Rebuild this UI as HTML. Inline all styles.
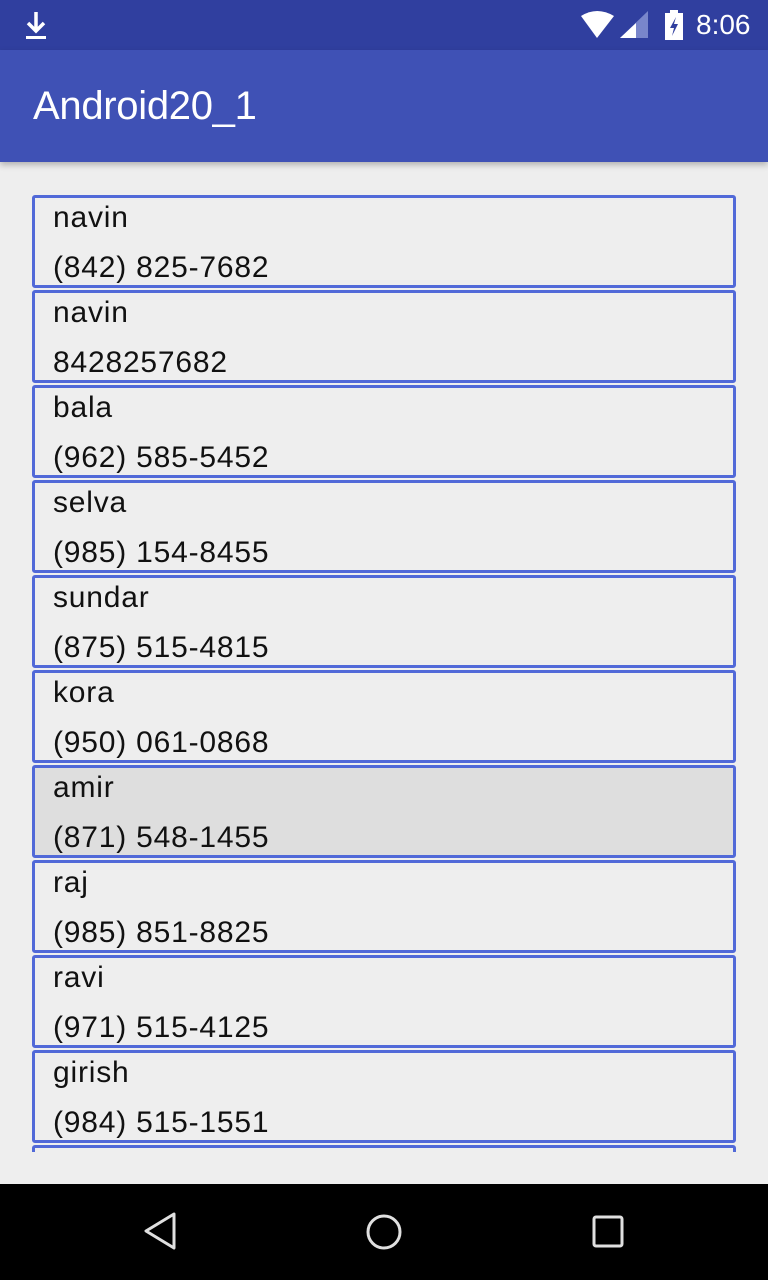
<!DOCTYPE html>
<html><head><meta charset="utf-8"><style>
*{margin:0;padding:0;box-sizing:border-box}
body{width:768px;height:1280px;background:#eeeeee;font-family:"Liberation Sans",Roboto,sans-serif;position:relative;overflow:hidden}
.sb{position:absolute;left:0;top:0;width:768px;height:50px;background:#303f9f;color:#fff}
.tb{position:absolute;left:0;top:50px;width:768px;height:112px;background:#3f51b5;box-shadow:0 3px 6px rgba(0,0,0,.25);z-index:2}
.tb span{position:absolute;left:33px;top:34px;font-size:40px;color:#fff;letter-spacing:-0.3px}
.list{position:absolute;left:0;top:162px;width:768px;height:990px;overflow:hidden}
.it{position:absolute;left:32px;width:704px;height:93px;border:3px solid #5169d8;border-radius:3px;background:#eeeeee}
.it.sel{background:#dedede}
.it div{position:absolute;left:18px;font-size:30px;color:#111;letter-spacing:0.8px}
.n{top:3px}.p{top:53px}
.nav{position:absolute;left:0;top:1184px;width:768px;height:96px;background:#000}
</style></head><body>
<div class="sb">
<svg style="position:absolute;left:24px;top:10px" width="24" height="32" viewBox="0 0 24 32"><path d="M12 2v18M4 13l8 8 8-8" stroke="#fff" stroke-width="3.5" fill="none"/><rect x="2" y="26" width="20" height="3" fill="#fff"/></svg>
<svg style="position:absolute;left:580px;top:10px" width="70" height="30" viewBox="0 0 70 30"><path d="M1 6 Q17 -4 34 6 L17 28Z" fill="#fff"/><path d="M40 28 L68 1 L68 28Z" fill="#7986cb"/><path d="M40 28 L56 13 L56 28Z" fill="#fff"/></svg>
<svg style="position:absolute;left:664px;top:10px" width="20" height="30" viewBox="0 0 20 30"><rect x="6" y="0" width="8" height="3" fill="#fff"/><rect x="1" y="3" width="18" height="27" fill="#fff"/><path d="M12 7 L6 18 L10 18 L8 26 L14 14 L10 14Z" fill="#303f9f"/></svg>
<span style="position:absolute;left:696px;top:9px;font-size:28px">8:06</span>
</div>
<div class="tb"><span>Android20_1</span></div>
<div class="list">
<div class="it" style="top:33px"><div class="n">navin</div><div class="p">(842) 825-7682</div></div>
<div class="it" style="top:128px"><div class="n">navin</div><div class="p">8428257682</div></div>
<div class="it" style="top:223px"><div class="n">bala</div><div class="p">(962) 585-5452</div></div>
<div class="it" style="top:318px"><div class="n">selva</div><div class="p">(985) 154-8455</div></div>
<div class="it" style="top:413px"><div class="n">sundar</div><div class="p">(875) 515-4815</div></div>
<div class="it" style="top:508px"><div class="n">kora</div><div class="p">(950) 061-0868</div></div>
<div class="it sel" style="top:603px"><div class="n">amir</div><div class="p">(871) 548-1455</div></div>
<div class="it" style="top:698px"><div class="n">raj</div><div class="p">(985) 851-8825</div></div>
<div class="it" style="top:793px"><div class="n">ravi</div><div class="p">(971) 515-4125</div></div>
<div class="it" style="top:888px"><div class="n">girish</div><div class="p">(984) 515-1551</div></div>
<div class="it" style="top:983px"></div>
</div>
<div class="nav">
<svg style="position:absolute;left:140px;top:28px" width="40" height="40" viewBox="0 0 40 40"><path d="M34 4 L6 21 L34 38Z" transform="translate(0,-2)" fill="none" stroke="#e0e0e0" stroke-width="3" stroke-linejoin="round"/></svg>
<svg style="position:absolute;left:364px;top:28px" width="40" height="40" viewBox="0 0 40 40"><circle cx="20" cy="20" r="16" fill="none" stroke="#e0e0e0" stroke-width="3"/></svg>
<svg style="position:absolute;left:590px;top:30px" width="36" height="36" viewBox="0 0 36 36"><rect x="4" y="3" width="28" height="29" rx="2" fill="none" stroke="#e0e0e0" stroke-width="3"/></svg>
</div>
</body></html>
